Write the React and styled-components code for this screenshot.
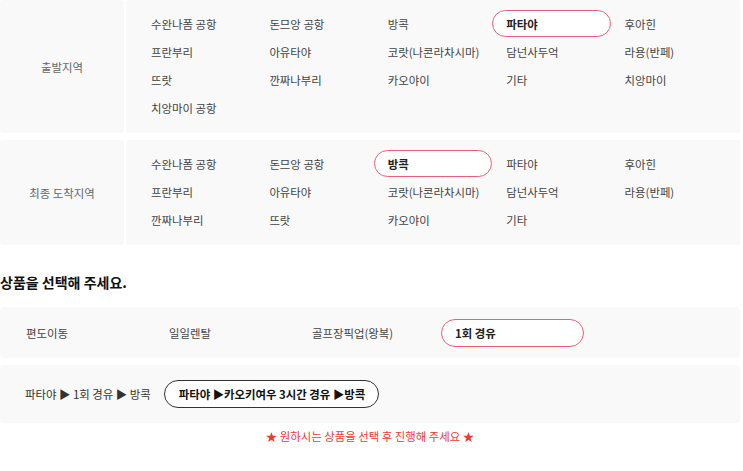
import React from "react";
import styled, { createGlobalStyle } from "styled-components";

const GlobalStyle = createGlobalStyle`
  html, body { margin: 0; padding: 0; background: #ffffff; }
  body { font-family: "Noto Sans CJK KR", "Noto Sans", sans-serif; }
`;

const Wrapper = styled.div`
  width: 740px;
  font-family: "Noto Sans CJK KR", "Noto Sans", sans-serif;
  font-size: 11.4px;
  color: #444;
`;

const RegionPanel = styled.div`
  display: grid;
  grid-template-columns: 124px 1fr;
  column-gap: 2px;
  & + & { margin-top: 7px; }
`;

const LabelCell = styled.div`
  background: #f9f9f9;
  border-radius: 3px;
  display: flex;
  align-items: center;
  justify-content: center;
  color: #666;
`;

const OptionsCell = styled.div`
  background: #f9f9f9;
  border-radius: 3px;
  padding: 10px 11px 11px;
  display: grid;
  grid-template-columns: repeat(5, 1fr);
  grid-auto-rows: 28px;
`;

const Option = styled.div`
  box-sizing: border-box;
  height: ${(p) => (p.$h ? p.$h : 27)}px;
  display: flex;
  align-items: center;
  padding-left: 13px;
  border-radius: 14px;
  border: 1px solid ${(p) => (p.$selected ? "#e8607a" : "transparent")};
  background: ${(p) => (p.$selected ? "#ffffff" : "transparent")};
  font-weight: ${(p) => (p.$selected ? 700 : 400)};
  color: ${(p) => (p.$selected ? "#222" : "#444")};
  white-space: nowrap;
`;

const Title = styled.h2`
  margin: 27px 0 15px;
  font-size: 14px;
  line-height: 20px;
  font-weight: 700;
  color: #111;
`;

const ProductPanel = styled.div`
  background: #f9f9f9;
  border-radius: 4px;
  padding: 12px 12px 11px;
  display: grid;
  grid-template-columns: repeat(4, 143px);
`;

const RoutePanel = styled.div`
  margin-top: 7px;
  background: #f9f9f9;
  border-radius: 4px;
  padding: 15px 12px;
  display: flex;
  align-items: center;
  gap: 13px;
`;

const RouteText = styled.span`
  padding-left: 13px;
  color: #333;
`;

const RoutePill = styled.div`
  box-sizing: border-box;
  height: 28px;
  display: flex;
  align-items: center;
  padding: 0 13px 0 14px;
  border: 1px solid #333;
  border-radius: 14px;
  background: #fff;
  font-weight: 700;
  color: #111;
`;

const Notice = styled.p`
  margin: 3px 0 0;
  text-align: center;
  line-height: 20px;
  color: #ee3a2f;
`;

const departures = [
  "수완나폼 공항", "돈므앙 공항", "방콕", "파타야", "후아힌",
  "프란부리", "아유타야", "코랏(나콘라차시마)", "담넌사두억", "라용(반페)",
  "뜨랏", "깐짜나부리", "카오야이", "기타", "치앙마이",
  "치앙마이 공항",
];

const arrivals = [
  "수완나폼 공항", "돈므앙 공항", "방콕", "파타야", "후아힌",
  "프란부리", "아유타야", "코랏(나콘라차시마)", "담넌사두억", "라용(반페)",
  "깐짜나부리", "뜨랏", "카오야이", "기타",
];

const products = ["편도이동", "일일렌탈", "골프장픽업(왕복)", "1회 경유"];

function Region({ label, items, selected }) {
  return (
    <RegionPanel>
      <LabelCell>{label}</LabelCell>
      <OptionsCell>
        {items.map((it, i) => (
          <Option key={i} $selected={it === selected}>{it}</Option>
        ))}
      </OptionsCell>
    </RegionPanel>
  );
}

export default function App() {
  return (
    <Wrapper>
      <GlobalStyle />
      <Region label="출발지역" items={departures} selected="파타야" />
      <Region label="최종 도착지역" items={arrivals} selected="방콕" />
      <Title>상품을 선택해 주세요.</Title>
      <ProductPanel>
        {products.map((p) => (
          <Option key={p} $h={28} $selected={p === "1회 경유"}>{p}</Option>
        ))}
      </ProductPanel>
      <RoutePanel>
        <RouteText>파타야 ▶ 1회 경유 ▶ 방콕</RouteText>
        <RoutePill>파타야 ▶카오키여우 3시간 경유 ▶방콕</RoutePill>
      </RoutePanel>
      <Notice>★ 원하시는 상품을 선택 후 진행해 주세요 ★</Notice>
    </Wrapper>
  );
}
